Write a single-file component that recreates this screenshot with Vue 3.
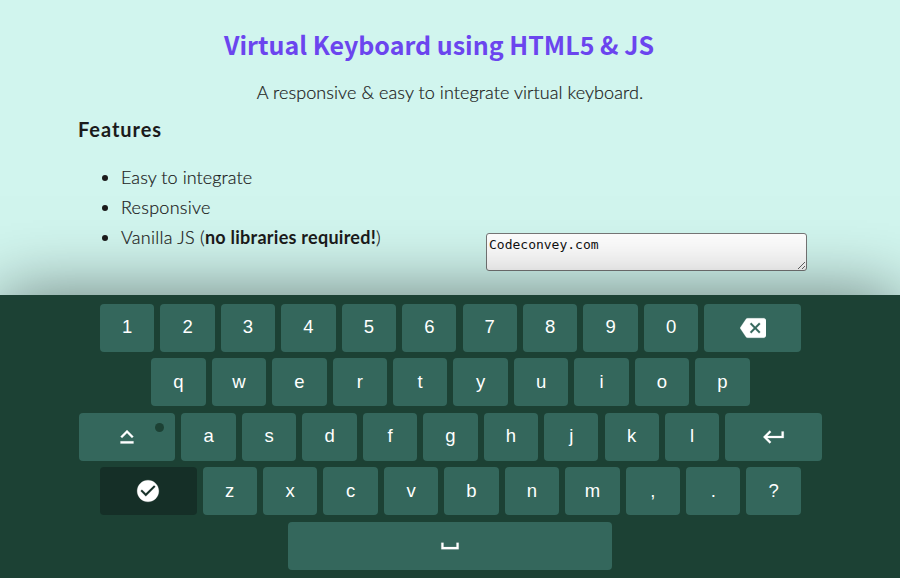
<script setup>
import { ref } from 'vue'

const text = ref('Codeconvey.com')
const capsLock = ref(false)

const rows = [
  ['1', '2', '3', '4', '5', '6', '7', '8', '9', '0', 'backspace'],
  ['q', 'w', 'e', 'r', 't', 'y', 'u', 'i', 'o', 'p'],
  ['caps', 'a', 's', 'd', 'f', 'g', 'h', 'j', 'k', 'l', 'enter'],
  ['done', 'z', 'x', 'c', 'v', 'b', 'n', 'm', ',', '.', '?'],
  ['space'],
]

const icons = {
  backspace: 'M22 3H7c-.69 0-1.23.35-1.59.88L0 12l5.41 8.11c.36.53.9.89 1.59.89h15c1.1 0 2-.9 2-2V5c0-1.1-.9-2-2-2zm-3 12.59L17.59 17 14 13.41 10.41 17 9 15.59 12.59 12 9 8.41 10.41 7 14 10.59 17.59 7 19 8.41 15.41 12 19 15.59z',
  caps: 'M12 8.41L16.59 13 18 11.59l-6-6-6 6L7.41 13 12 8.41zM6 18h12v-2H6v2z',
  enter: 'M19 7v4H5.83l3.58-3.59L8 6l-6 6 6 6 1.41-1.41L5.83 13H21V7z',
  done: 'M12 2C6.48 2 2 6.48 2 12s4.48 10 10 10 10-4.48 10-10S17.52 2 12 2zm-2 15l-5-5 1.41-1.41L10 14.17l7.59-7.59L19 8l-9 9z',
  space: 'M18 9v4H6V9H4v6h16V9z',
}

const press = (key) => {
  if (key === 'backspace') text.value = text.value.slice(0, -1)
  else if (key === 'caps') capsLock.value = !capsLock.value
  else if (key === 'enter') text.value += '\n'
  else if (key === 'space') text.value += ' '
  else if (key !== 'done') text.value += capsLock.value ? key.toUpperCase() : key
}

const keyClass = (key) => ({
  wide: icons[key] && key !== 'space',
  'extra-wide': key === 'space',
  dark: key === 'done',
})
</script>

<template>
  <div class="page">
    <h1>Virtual Keyboard using HTML5 &amp; JS</h1>
    <p class="intro">A responsive &amp; easy to integrate virtual keyboard.</p>
    <div class="content">
      <div class="features">
        <h3>Features</h3>
        <ul>
          <li>Easy to integrate</li>
          <li class="loose">Responsive</li>
          <li class="loose">Vanilla JS (<b>no libraries required!</b>)</li>
        </ul>
      </div>
      <textarea v-model="text" spellcheck="false"></textarea>
    </div>
    <div class="keyboard">
      <div v-for="(row, i) in rows" :key="i" class="row">
        <button v-for="key in row" :key="key" type="button" :class="['key', keyClass(key)]" @click="press(key)">
          <svg v-if="icons[key]" viewBox="0 0 24 24"><path :d="icons[key]" /></svg>
          <template v-else>{{ capsLock ? key.toUpperCase() : key }}</template>
          <i v-if="key === 'caps'" :class="['light', { on: capsLock }]"></i>
        </button>
      </div>
    </div>
  </div>
</template>

<style>
body { margin: 0; overflow: hidden; }
</style>

<style scoped>
.page {
  display: flex;
  flex-direction: column;
  height: 578px;
  background: #d1f5ee;
  color: #1b1b1b;
  font-family: Lato, "Liberation Sans", sans-serif;
  overflow: hidden;
}
h1 {
  margin: 25px 22px 0 0;
  text-align: center;
  color: #6b45ee;
  font: bold 25px/38px "Noto Sans CJK SC", "Open Sans", sans-serif;
}
.intro {
  margin: 14px 0 0;
  font-size: 18px;
  font-weight: 300;
  line-height: 30px;
  text-align: center;
  letter-spacing: .08px;
  -webkit-text-stroke: .2px;
}
.content {
  display: flex;
  flex: 1;
  padding-left: 78px;
}
.features { width: 408px; }
h3 {
  margin: 7px 0 0;
  font-size: 20px;
  line-height: 30px;
  letter-spacing: .95px;
}
ul {
  margin: 18px 0 0;
  padding-left: 43px;
  font-size: 18px;
  font-weight: 300;
  line-height: 30px;
  letter-spacing: .08px;
  -webkit-text-stroke: .2px;
}
.loose { letter-spacing: .26px; }
b {
  font-weight: 700;
  -webkit-text-stroke: 0;
}
textarea {
  box-sizing: border-box;
  width: 321px;
  height: 38px;
  margin-top: 126px;
  padding: 2px;
  border: 1px solid #767676;
  border-radius: 3px;
  background: #fff;
  color: #111;
  font: 13px/18px "DejaVu Sans Mono", monospace;
  outline: none;
  overflow: hidden;
}
.keyboard {
  position: relative;
  display: flex;
  flex-direction: column;
  gap: 6.3px;
  box-sizing: border-box;
  height: 283px;
  padding: 8.6px 0 0 .8px;
  background: #1c4134;
  box-shadow: 0 0 66px rgba(0, 0, 0, .5);
}
.row {
  display: flex;
  justify-content: center;
  gap: 6.05px;
}
.key {
  position: relative;
  display: flex;
  align-items: center;
  justify-content: center;
  box-sizing: border-box;
  width: 54.4px;
  height: 48.2px;
  padding: 0 0 1px;
  border: 0;
  border-radius: 4px;
  background: #34675c;
  color: #fff;
  font: 18.5px "Liberation Sans", Arial, sans-serif;
}
.wide { width: 96.6px; }
.extra-wide { width: 324px; }
.dark { background: #152f27; }
.key svg {
  width: 26px;
  height: 26px;
  margin-top: 1px;
  fill: currentColor;
  stroke: currentColor;
  stroke-width: .2;
}
.light {
  position: absolute;
  top: 10.5px;
  right: 11px;
  width: 9px;
  height: 9px;
  border-radius: 50%;
  background: #1c4134;
}
.light.on { background: #08ff00; }
</style>
